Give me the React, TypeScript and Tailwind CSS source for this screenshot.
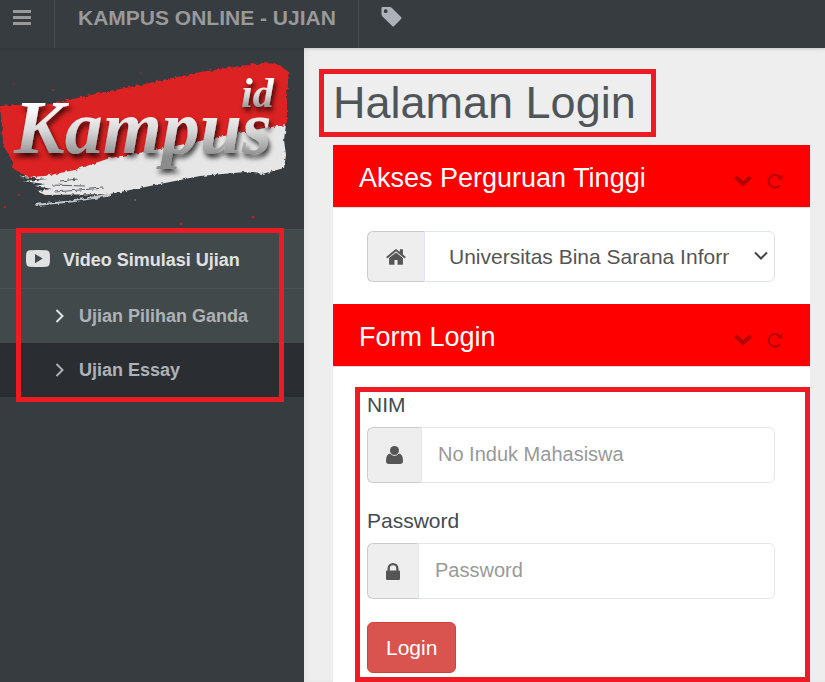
import type { ReactNode } from 'react'

function HomeIcon() {
  // Font Awesome 4 shape on the 1792 grid
  return (
    <svg className="h-[22px] w-5" viewBox="64 0 1664 1792" fill="currentColor" aria-hidden="true">
      <path d="M1472 992v480q0 26-19 45t-45 19h-384v-384h-256v384h-384q-26 0-45-19t-19-45v-480q0-1 .5-3t.5-3l575-474 575 474q1 2 1 6zm223-69l-62 74q-8 9-21 11h-3q-13 0-21-7l-692-577-692 577q-12 8-24 7-13-2-21-11l-62-74q-8-10-7-23.5t11-21.5l719-599q32-26 76-26t76 26l244 204v-195q0-14 9-23t23-9h192q14 0 23 9t9 23v408l219 182q10 8 11 21.5t-7 23.5z" />
    </svg>
  )
}

function UserIcon() {
  return (
    <svg className="h-[18px] w-[17px]" viewBox="0 0 17 18" fill="currentColor" aria-hidden="true">
      <circle cx="8.500" cy="4.500" r="4.500" />
      <path d="M4 7.600Q6 10 8.500 10T13 7.600Q17 8.500 17 15Q17 18 14 18H3Q0 18 0 15Q0 8.500 4 7.600Z" />
    </svg>
  )
}

function LockIcon() {
  return (
    <svg className="h-[17px] w-[14px]" viewBox="0 0 14 17" fill="currentColor" fillRule="evenodd" aria-hidden="true">
      <path d="M1.500 7.500V5.500A5.500 5.500 0 0 1 12.500 5.500V7.500H13Q14 7.500 14 8.500V16Q14 17 13 17H1Q0 17 0 16V8.500Q0 7.500 1 7.500ZM3.800 7.500H10.200V5.500A3.200 3.200 0 0 0 3.800 5.500Z" />
    </svg>
  )
}

function AngleRight({ className }: { className: string }) {
  return (
    <svg className={className} viewBox="0 0 10 14" fill="none" stroke="currentColor" strokeWidth={2} aria-hidden="true">
      <path d="M1.5 1l6 6-6 6" />
    </svg>
  )
}

function Logo() {
  return (
    <svg className="block w-full" viewBox="0 -2 304 181" role="img" aria-label="Kampus id">
      <defs>
        <linearGradient id="letters" x1="0" y1="0" x2="0" y2="1">
          <stop offset="0.25" stopColor="#ffffff" />
          <stop offset="0.55" stopColor="#d8d8d8" />
          <stop offset="0.85" stopColor="#8c8c8c" />
        </linearGradient>
        <filter id="rough" x="-5%" y="-5%" width="110%" height="110%">
          <feTurbulence type="fractalNoise" baseFrequency="0.25" numOctaves="2" seed="4" result="noise" />
          <feDisplacementMap in="SourceGraphic" in2="noise" scale="4" />
        </filter>
        <filter id="shade" x="-10%" y="-20%" width="120%" height="150%">
          <feDropShadow dx="2" dy="4" stdDeviation="2.5" floodColor="#000" floodOpacity="0.75" />
        </filter>
      </defs>
      <g filter="url(#rough)">
        <path
          fill="#e6e6e6"
          d="M20 127L110 106L200 90L286 74L284 90L286 105L284 118L262 124L245 122L200 126L160 134L110 144L45 145L37 141L52 139L35 136L45 134L22 131L48 129Z"
        />
        <path
          fill="#dc2023"
          d="M0 56L12 55L50 54L100 43L140 35L200 22L262 13L278 14L289 22L287 45L287 75L262 78L200 91L150 101L110 108L75 120L45 126L28 127L12 118L13 112L3 95L2 75Z"
        />
        <path d="M35 154L75 150L110 143L112 146L75 152L36 156Z" fill="#c4c6c7" />
        <path d="M52 135L85 136M55 142L104 138M60 131L78 129" stroke="#5b5f61" strokeWidth={1} />
      </g>
      <g fill="#b02226">
        <circle cx="53" cy="40" r="1" />
        <circle cx="141" cy="23" r="0.7" />
        <circle cx="14" cy="34" r="0.7" />
        <circle cx="5" cy="157" r="1.2" />
        <circle cx="253" cy="167" r="1.6" />
        <circle cx="181" cy="174" r="1.4" />
        <circle cx="19" cy="145" r="1" />
      </g>
      <circle cx="135" cy="150" r="0.8" fill="#8b8e90" />
      <g filter="url(#shade)" fill="url(#letters)" className="font-['Liberation_Serif',serif] font-bold italic">
        <text x="14" y="103" fontSize="76">
          Kampus
        </text>
        <text x="241" y="57" fontSize="42">
          id
        </text>
      </g>
    </svg>
  )
}

function Panel({ title, children }: { title: string; children: ReactNode }) {
  return (
    <section className="bg-white">
      <header className="flex h-[63px] items-center justify-between border-b border-[#ddd] bg-[#ff0000] px-[26px] pt-[3px]">
        <h2 className="text-[27px] leading-8 text-white">{title}</h2>
        <div className="flex items-center gap-[15px] pt-[6px] text-[#b80000]">
          <button type="button" aria-label="Collapse">
            <svg className="h-3 w-[18px]" viewBox="0 0 18 12" fill="none" stroke="currentColor" strokeWidth={4}>
              <path d="M1.400 2L9 9L16.600 2" />
            </svg>
          </button>
          <button type="button" aria-label="Reload">
            <svg className="h-4 w-[17px]" viewBox="0 0 17 16" fill="none" stroke="currentColor" strokeWidth={2}>
              <path d="M12.600 4A6.300 6.300 0 1 0 13 12.200" />
              <path d="M15.500 1V6.500H10Z" fill="currentColor" stroke="none" />
            </svg>
          </button>
        </div>
      </header>
      {children}
    </section>
  )
}

function Addon({ children }: { children: ReactNode }) {
  return (
    <span className="flex shrink-0 items-center rounded-l-md border border-r-0 border-[#ccc] bg-[#eee] px-[18px] text-[#555]">
      {children}
    </span>
  )
}

interface FieldProps {
  id: string
  label: string
  type: string
  placeholder: string
  icon: ReactNode
}

function Field({ id, label, type, placeholder, icon }: FieldProps) {
  return (
    <div className="mb-[23px]">
      <label htmlFor={id} className="mb-[7px] block text-[21px] leading-[30px] text-[#444b50]">
        {label}
      </label>
      <div className="flex h-14">
        <Addon>{icon}</Addon>
        <input
          id={id}
          type={type}
          placeholder={placeholder}
          className="w-full min-w-0 rounded-r-md border border-[#e2e5ea] bg-white px-4 pb-[2px] text-[20px] text-[#555] placeholder:text-[#999]"
        />
      </div>
    </div>
  )
}

export default function App() {
  return (
    <div className="flex min-h-screen flex-col bg-[#eee] font-['Liberation_Sans',Arial,sans-serif]">
      <header className="z-10 flex h-12 shrink-0 bg-[#373c40] text-[#999] shadow-[0_1px_3px_rgba(0,0,0,0.15)]">
        <button type="button" aria-label="Menu" className="flex w-[55px] border-r border-[#4a4f53] pt-[10px] pl-[13px]">
          <svg className="h-[15px] w-[18px]" viewBox="0 0 18 15" fill="currentColor">
            <path d="M0 0h18v3H0zM0 6h18v3H0zM0 12h18v3H0z" />
          </svg>
        </button>
        <a href="#" className="border-r border-[#4a4f53] pr-[22px] pl-[23px] text-[21px] leading-9 font-bold whitespace-nowrap">
          KAMPUS ONLINE - UJIAN
        </a>
        <a href="#" aria-label="Tag" className="pt-[6px] pl-[22px] text-[#adb2b8]">
          <svg className="size-[21px]" viewBox="0 0 21 21" fill="currentColor" fillRule="evenodd">
            <path d="M1.800 1H9Q10 1 10.700 1.700L20 11Q21 12 20 13L13.200 20Q12.200 21 11.200 20L1.700 10.700Q0.500 9.500 0.500 8.500V2.300Q0.500 1 1.800 1ZM4.700 3.300A1.900 1.900 0 1 0 4.700 7.100A1.900 1.900 0 1 0 4.700 3.300Z" />
          </svg>
        </a>
      </header>

      <div className="flex grow">
        <aside className="w-[304px] shrink-0 bg-[#373c40]">
          <Logo />
          <nav className="relative text-[18px] font-bold">
            <a href="#" className="flex h-[60px] items-center border-y border-[#4a5153] bg-[#42494b] pt-[2px] pl-[26px] text-[#e0e1e3]">
              <svg className="mr-[13px] mb-1 h-[17px] w-6" viewBox="0 0 24 17" fill="currentColor" fillRule="evenodd">
                <path d="M4 0.300Q12-0.300 20 0.300Q23.500 0.500 23.800 4Q24.200 8.500 23.800 13Q23.500 16.500 20 16.700Q12 17.300 4 16.700Q0.500 16.500 0.200 13Q-0.200 8.500 0.200 4Q0.500 0.500 4 0.300ZM9 4V13.300L16.700 8.600Z" />
              </svg>
              Video Simulasi Ujian
            </a>
            <ul className="text-[#aeb2b7]">
              <li>
                <a href="#" className="flex h-[54px] items-center bg-[#42494b] pl-[55px]">
                  <AngleRight className="mr-[14px] h-[14px] w-[10px] text-[#e0e1e3]" />
                  Ujian Pilihan Ganda
                </a>
              </li>
              <li>
                <a href="#" className="flex h-[54px] items-center bg-[#2a2e32] pl-[55px]">
                  <AngleRight className="mr-[14px] h-[14px] w-[10px]" />
                  Ujian Essay
                </a>
              </li>
            </ul>
            <div className="pointer-events-none absolute -top-px right-5 -bottom-[5px] left-4 border-5 border-[#ed1c24]" />
          </nav>
        </aside>

        <main className="flex min-w-0 grow flex-col pt-[21px] pr-[15px] pl-[15px] shadow-[inset_4px_0_4px_rgba(0,0,0,0.03)]">
          <h1 className="mb-2 self-start border-5 border-[#ed1c24] pr-[15px] pl-[9px] text-[45px] leading-[58px] text-[#50555a]">
            Halaman Login
          </h1>
          <div className="ml-[14px] flex grow flex-col bg-white">
            <Panel title="Akses Perguruan Tinggi">
              <div className="pt-[23px] pr-[35px] pb-[22px] pl-[34px]">
                <div className="relative flex h-[51px]">
                  <Addon>
                    <HomeIcon />
                  </Addon>
                  <select
                    aria-label="Perguruan Tinggi"
                    className="w-full min-w-0 appearance-none rounded-r-md border border-[#dfe3ee] bg-white pr-[45px] pl-6 text-[21px] text-[#555]"
                  >
                    <option>Universitas Bina Sarana Informatika</option>
                  </select>
                  <svg
                    className="pointer-events-none absolute top-5 right-[6px] h-[10px] w-4"
                    viewBox="0 0 16 10"
                    fill="none"
                    stroke="#444"
                    strokeWidth={2}
                  >
                    <path d="M2 1.500L8 7.500L14 1.500" />
                  </svg>
                </div>
              </div>
            </Panel>
            <Panel title="Form Login">
              <form className="relative pt-[23px] pr-[35px] pb-[9px] pl-[34px]">
                <Field id="nim" label="NIM" type="text" placeholder="No Induk Mahasiswa" icon={<UserIcon />} />
                <Field id="password" label="Password" type="password" placeholder="Password" icon={<LockIcon />} />
                <button
                  type="button"
                  className="block h-[51px] rounded-md border border-[#d43f3a] bg-[#d9534f] px-[18px] text-[21px] text-white"
                >
                  Login
                </button>
                <div className="pointer-events-none absolute top-5 right-0 bottom-0 left-[22px] border-5 border-[#ed1c24]" />
              </form>
            </Panel>
          </div>
        </main>
      </div>
    </div>
  )
}
